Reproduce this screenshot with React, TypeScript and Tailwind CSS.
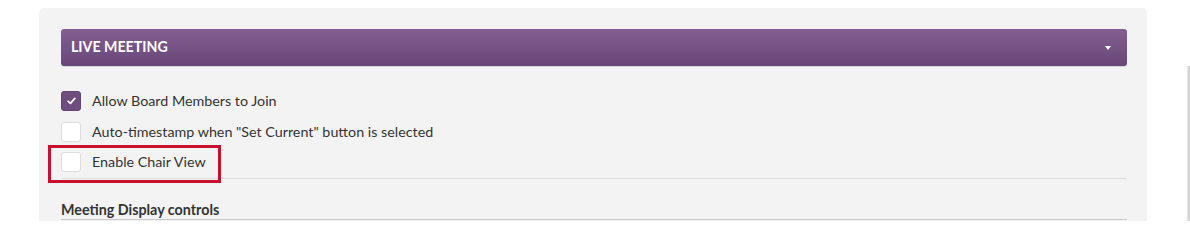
import React, { useState } from 'react';

interface Option {
  id: string;
  label: string;
  checked: boolean;
}

const initialOptions: Option[] = [
  { id: 'join', label: 'Allow Board Members to Join', checked: true },
  { id: 'timestamp', label: 'Auto-timestamp when "Set Current" button is selected', checked: false },
  { id: 'chair', label: 'Enable Chair View', checked: false },
];

const CheckBox: React.FC<{ checked: boolean; onToggle: () => void }> = ({ checked, onToggle }) => (
  <button
    type="button"
    onClick={onToggle}
    className={`w-[20px] h-[20px] rounded-[3px] flex items-center justify-center shrink-0 ${
      checked ? 'bg-[#6f4d7e] border border-[#654472]' : 'bg-white border border-[#dcdcdc]'
    }`}
  >
    {checked && (
      <svg width="9" height="8" viewBox="0 0 9 8">
        <path d="M1.2 4.4 L3.4 6.4 L7.8 1.4" fill="none" stroke="#fff" strokeWidth="1.8" strokeLinecap="round" strokeLinejoin="round" />
      </svg>
    )}
  </button>
);

const App: React.FC = () => {
  const [options, setOptions] = useState(initialOptions);

  const toggle = (id: string) =>
    setOptions((prev) => prev.map((o) => (o.id === id ? { ...o, checked: !o.checked } : o)));

  return (
    <div className="w-[1190px] h-[221px] bg-white relative overflow-hidden font-['Lato','Liberation_Sans',sans-serif] text-[#333]">
      <div className="ml-[39px] mt-[8px] w-[1108px] h-[240px] rounded-[5px] bg-[#f3f3f3] pl-[22px] pr-[20px] pt-[21px]">
        {/* Section header */}
        <div className="h-[37px] rounded-[3px] bg-gradient-to-b from-[#845e90] to-[#674878] flex items-center justify-between pl-[10px] pr-[16px] shadow-[0_1px_0_rgba(0,0,0,0.12)]">
          <span className="text-white text-[14.2px] font-bold leading-none">LIVE MEETING</span>
          <span className="w-0 h-0 border-l-[3.5px] border-r-[3.5px] border-t-[4px] border-l-transparent border-r-transparent border-t-white" />
        </div>

        {/* Options */}
        <div className="mt-[20px] border-b border-[#dedede]">
          {options.map((o) => (
            <div key={o.id} className="h-[30.5px] flex items-center gap-[11px]">
              <CheckBox checked={o.checked} onToggle={() => toggle(o.id)} />
              <span className="text-[14.3px] leading-none">{o.label}</span>
            </div>
          ))}
        </div>

        {/* Next section */}
        <div className="mt-[23px] pb-[1px] border-b border-[#c9c9c9] text-[14.3px] font-bold leading-[16px] text-[#333]">
          Meeting Display controls
        </div>
      </div>

      {/* Highlight annotation */}
      <div className="absolute left-[48px] top-[145px] w-[173px] h-[38px] border-[3px] border-[#c8102e]" />

      {/* Scrollbar */}
      <div className="absolute right-0 top-[66px] bottom-0 w-[3px] bg-[#d4d4d4] border-l border-[#e6e6e6]" />
    </div>
  );
};

export default App;
